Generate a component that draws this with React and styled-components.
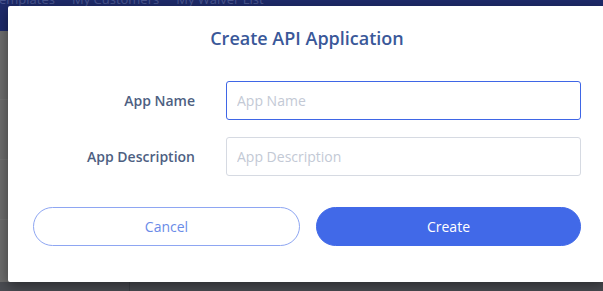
import React from "react";
import styled, { createGlobalStyle } from "styled-components";

const GlobalStyle = createGlobalStyle`
  html, body { margin: 0; padding: 0; }
  body {
    width: 603px;
    height: 291px;
    overflow: hidden;
    font-family: "Open Sans", "Noto Sans", sans-serif;
    background: #4b4d53;
  }
  * { box-sizing: border-box; }
`;

const Page = styled.div`
  position: relative;
  width: 603px;
  height: 291px;
  overflow: hidden;
  display: flex;
  flex-direction: column;
`;

const NavBar = styled.nav`
  height: 31px;
  flex: none;
  background: #1e2b6b;
  display: flex;
  align-items: flex-start;
  gap: 17px;
  overflow: hidden;
`;

const NavItem = styled.span`
  font-size: 13px;
  line-height: 13px;
  margin-top: -7px;
  color: #4a5690;
  white-space: nowrap;
  &:first-child { margin-left: -1px; }
`;

const Main = styled.main`
  flex: 1;
  background: #6e6e6e;
  display: flex;
  flex-direction: column;
`;

const MainRow = styled.div`
  height: ${(p) => p.$h}px;
  border-bottom: 1px solid #747474;
  flex: none;
`;

const Footer = styled.footer`
  height: 9px;
  flex: none;
  background: #4b4d53;
  display: grid;
  grid-template-columns: 130px 1fr;
  & > div:first-child { border-right: 1px solid #3f4248; }
`;

const Modal = styled.div`
  position: absolute;
  left: 8px;
  top: 6px;
  width: 598px;
  height: 276px;
  background: #ffffff;
  border-radius: 2px;
  box-shadow: 0 4px 14px rgba(0, 0, 0, 0.45);
  padding: 20px 25px 0 25px;
  display: flex;
  flex-direction: column;
`;

const Title = styled.h2`
  margin: 0;
  text-align: center;
  font-size: 18px;
  line-height: 24px;
  font-weight: 600;
  color: #3a5899;
`;

const Form = styled.div`
  margin-top: 31px;
  display: flex;
  flex-direction: column;
  gap: 17px;
`;

const Row = styled.label`
  display: grid;
  grid-template-columns: 162px 1fr;
  column-gap: 31px;
  align-items: center;
`;

const Label = styled.span`
  text-align: right;
  font-size: 14px;
  font-weight: 600;
  color: #4e5f82;
`;

const Input = styled.input`
  height: 39px;
  width: 100%;
  border: 1px solid ${(p) => (p.$focused ? "#3f66e6" : "#d6dae2")};
  border-radius: 3px;
  padding: 0 10px;
  font-family: "Open Sans", "Noto Sans", sans-serif;
  font-size: 14px;
  color: #333;
  outline: none;
  background: #fff;
  &::placeholder { color: #c3c9d5; }
`;

const Actions = styled.div`
  margin-top: 31px;
  display: grid;
  grid-template-columns: 267px 1fr;
  column-gap: 16px;
`;

const Button = styled.button`
  height: 39px;
  border-radius: 20px;
  font-family: "Open Sans", "Noto Sans", sans-serif;
  font-size: 14px;
  cursor: pointer;
  border: 1px solid ${(p) => (p.$primary ? "#4169e8" : "#8ea6f2")};
  background: ${(p) => (p.$primary ? "#4169e8" : "#ffffff")};
  color: ${(p) => (p.$primary ? "#ffffff" : "#6a8be8")};
`;

export default function App() {
  return (
    <>
      <GlobalStyle />
      <Page>
        <NavBar>
          <NavItem>emplates</NavItem>
          <NavItem>My Customers</NavItem>
          <NavItem>My Waiver List</NavItem>
        </NavBar>
        <Main>
          <MainRow $h={69} />
          <MainRow $h={60} />
          <MainRow $h={60} />
        </Main>
        <Footer>
          <div />
          <div />
        </Footer>
        <Modal>
          <Title>Create API Application</Title>
          <Form>
            <Row>
              <Label>App Name</Label>
              <Input $focused placeholder="App Name" />
            </Row>
            <Row>
              <Label>App Description</Label>
              <Input placeholder="App Description" />
            </Row>
          </Form>
          <Actions>
            <Button>Cancel</Button>
            <Button $primary>Create</Button>
          </Actions>
        </Modal>
      </Page>
    </>
  );
}
